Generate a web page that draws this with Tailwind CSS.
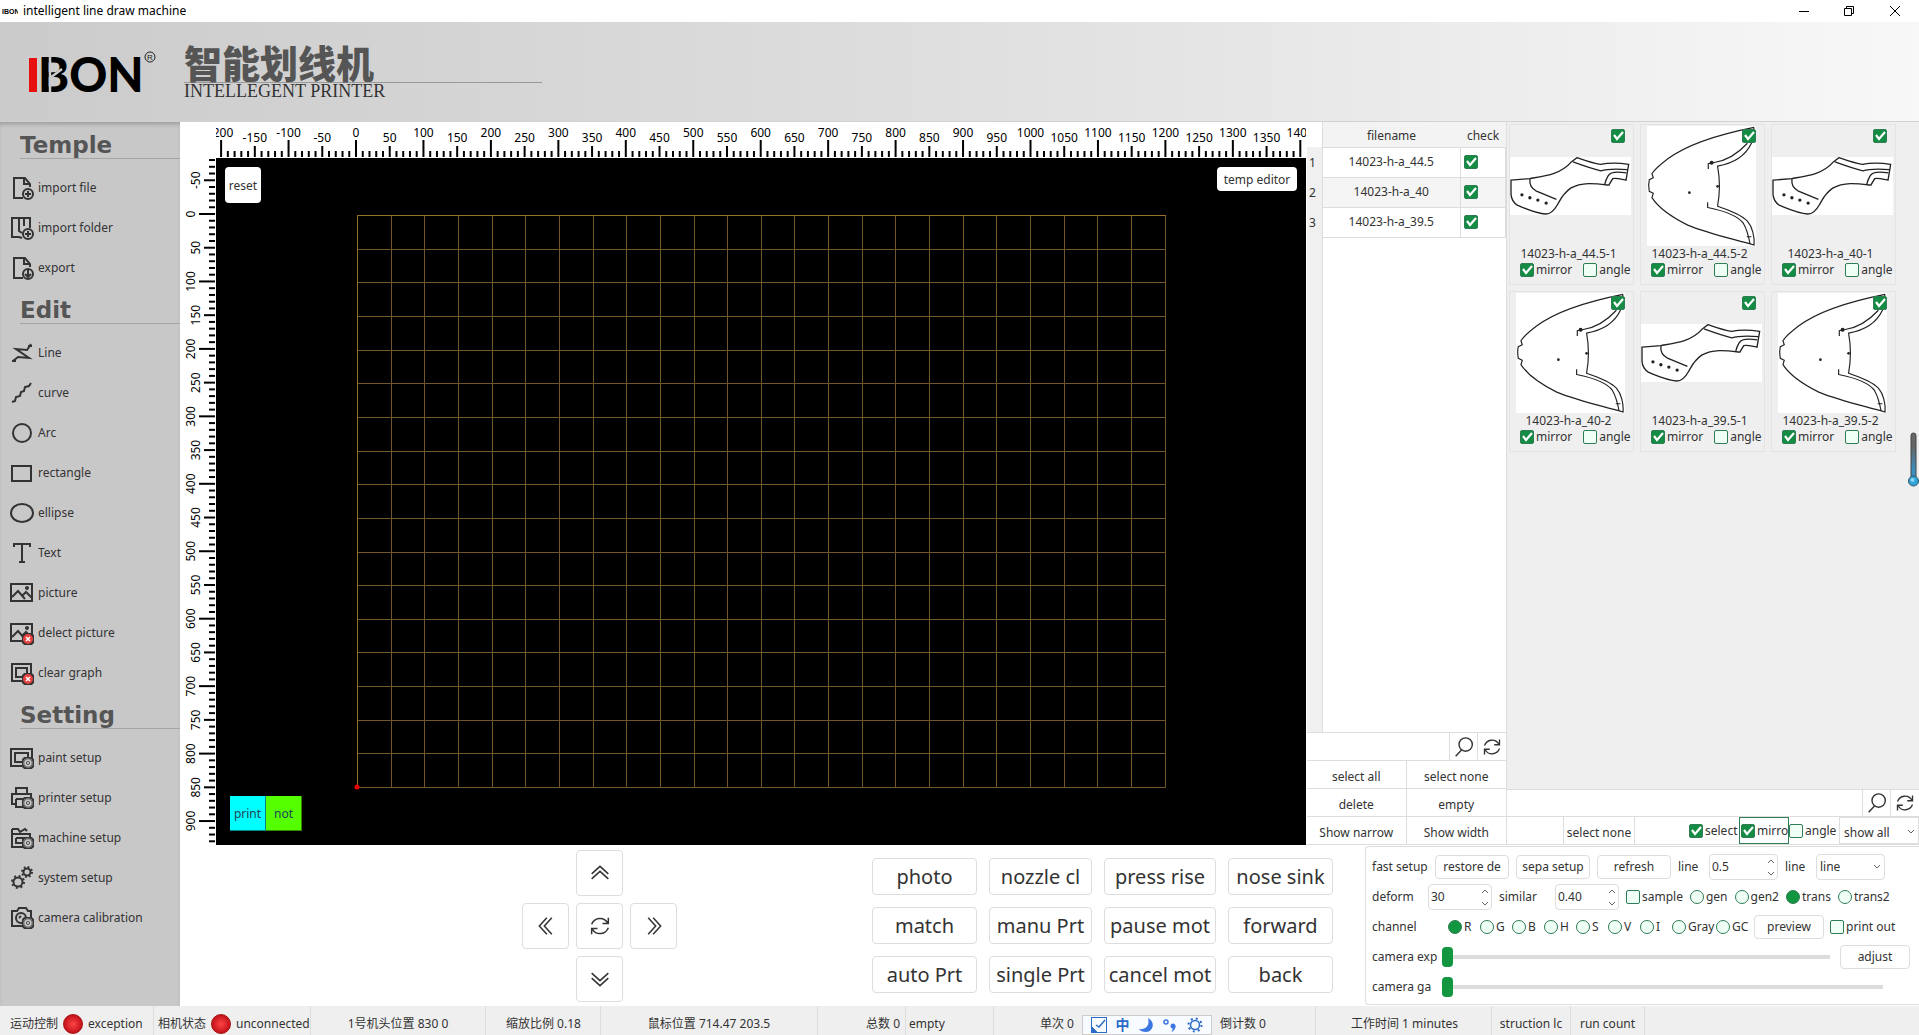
<!DOCTYPE html>
<html lang="en">
  <head>
    <meta charset="UTF-8" />
    <meta name="viewport" content="width=device-width, initial-scale=1.0" />
    <title>intelligent line draw machine</title>
    <script src="https://cdn.jsdelivr.net/npm/@tailwindcss/browser@4"></script>
  </head>
  <body
    class="h-screen overflow-hidden flex flex-col bg-white text-[#333] text-xs font-['Noto_Sans','Noto_Sans_CJK_SC',sans-serif]"
  >
    <!-- shared icons -->
    <svg class="hidden">
      <symbol id="tick" viewBox="0 0 14 14">
        <path d="M3 6l3 4 6-7" fill="none" stroke="#fff" stroke-width="2.2" />
      </symbol>
      <symbol id="down" viewBox="0 0 8 5">
        <path d="M1 1l3 3 3-3" fill="none" stroke="#666" />
      </symbol>
      <symbol id="up" viewBox="0 0 8 5">
        <path d="M1 4l3-3 3 3" fill="none" stroke="#666" />
      </symbol>
      <symbol id="search" viewBox="0 0 24 24">
        <g fill="none" stroke="#333" stroke-width="1.7">
          <circle cx="14" cy="9" r="8" />
          <path d="M9 15.500L2 23" />
        </g>
      </symbol>
      <symbol id="refresh" viewBox="0 0 24 24">
        <g fill="none" stroke="#333" stroke-width="1.8">
          <path d="M2 10C5 2 16 0 21 8M22 2v7h-7" />
          <path d="M22 14c-3 8-14 10-19 2M2 22v-7h7" />
        </g>
      </symbol>
      <symbol id="chev" viewBox="0 0 24 24">
        <path d="M2 13l10-9 10 9M2 19l10-9 10 9" fill="none" stroke="#333" stroke-width="1.800" />
      </symbol>
      <symbol id="gear" viewBox="0 0 12 12">
        <circle cx="6" cy="6" r="6" fill="#c9c9c9" />
        <circle cx="6" cy="6" r="4.200" fill="none" stroke="#444" stroke-width=".9" />
        <circle cx="6" cy="6" r="1.600" fill="none" stroke="#444" stroke-width=".9" />
        <circle cx="6" cy="6" r="5.200" fill="none" stroke="#444" stroke-width="1.200" stroke-dasharray="1.800 2.280" />
      </symbol>
      <symbol id="cross" viewBox="0 0 12 12">
        <circle cx="6" cy="6" r="6" fill="#e8423f" />
        <path d="M4 4l4 4M8 4l-4 4" stroke="#fff" stroke-width="1.5" />
      </symbol>
      <symbol id="shoe" viewBox="33 138 363 175">
        <g fill="none" stroke="#222" stroke-width="4">
          <path d="M35 208L92 203C140 195 185 190 218 152L234 140C262 150 285 158 305 160C335 154 365 156 390 160L382 208C368 205 350 200 342 203L330 223C290 218 250 212 215 232C190 250 185 265 175 282C165 300 155 310 140 310C110 308 80 294 55 284C40 275 36 265 35 250Z" />
          <path d="M222 153C255 165 285 175 306 180C330 172 360 174 386 176M383 186C360 182 335 182 328 195C322 205 320 210 318 220" />
          <path d="M92 203C90 225 98 232 110 240L172 266" />
        </g>
        <g fill="#222">
          <circle cx="68" cy="252" r="5" /><circle cx="92" cy="261" r="5" />
          <circle cx="116" cy="268" r="5" /><circle cx="141" cy="277" r="5" />
        </g>
      </symbol>
      <symbol id="vamp" viewBox="438 46 327 362">
        <g fill="none" stroke="#222" stroke-width="3.500">
          <path d="M760 50C650 72 560 100 500 145C470 168 455 185 452 190L456 202L444 208C441 220 442 232 444 243L456 249L452 262C470 290 510 320 560 345C620 370 690 385 760 405C762 380 755 350 740 333C720 312 680 298 650 288C658 245 658 210 650 167C700 158 735 135 752 98L760 50" />
          <path d="M622 176L622 160L640 156C680 150 715 125 740 98" />
          <path d="M620 276V292C660 300 710 315 728 340C740 360 744 380 748 402M738 380h14" />
        </g>
        <g fill="#222">
          <circle cx="565" cy="247" r="4" /><circle cx="650" cy="228" r="4" /><circle cx="632" cy="157" r="6" />
        </g>
      </symbol>
    </svg>

    <div class="h-[22px] shrink-0 flex items-center bg-white text-black">
      <svg class="ml-[2px] w-4 h-2" viewBox="0 0 16 8">
        <text x="0" y="7" font-size="7" font-weight="bold" font-family="Liberation Sans">IBON</text>
      </svg>
      <span class="ml-[5px]">intelligent line draw machine</span>
      <div class="ml-auto flex">
        <button class="w-[45px] h-[22px] grid place-items-center" aria-label="minimize">
          <svg class="w-3 h-3" viewBox="0 0 12 12"><path d="M1 6.500h10" stroke="#000" /></svg>
        </button>
        <button class="w-[45px] h-[22px] grid place-items-center" aria-label="restore">
          <svg class="w-3 h-3" viewBox="0 0 12 12">
            <path d="M1.500 3.500h7v7h-7zM3.500 3.500v-2h7v7h-2" fill="none" stroke="#000" />
          </svg>
        </button>
        <button class="w-[48px] h-[22px] grid place-items-center" aria-label="close">
          <svg class="w-3 h-3" viewBox="0 0 12 12"><path d="M1 1l10 10M11 1L1 11" stroke="#000" /></svg>
        </button>
      </div>
    </div>

    <header
      class="h-[100px] shrink-0 flex bg-linear-to-r from-[#cbcbcb] via-[#dfdfdf] to-[#f8f8f8] border-b border-[#d2d2d2]"
    >
      <svg class="w-[156px] h-[72px] ml-7 mt-4" viewBox="28 38 156 72">
        <rect x="29" y="58" width="8" height="34" fill="#e8110f" />
        <text x="38" y="92" font-size="47" font-weight="900" font-family="Lato" fill="#000">BON</text>
        <path d="M50 56v38M50 78l12-9" stroke="#cbcbcb" stroke-width="2.500" />
        <circle cx="150" cy="57" r="5" fill="none" stroke="#222" />
        <text x="150" y="60" font-size="8" text-anchor="middle" font-family="Liberation Sans" fill="#222">R</text>
      </svg>
      <div class="pt-[22px]">
        <div
          class="w-[358px] h-[39px] flex items-center border-b border-[#999] text-[38px]/9 font-black text-[#555]"
        >
          智能划线机
        </div>
        <div class="text-lg/4 text-[#333] font-['Liberation_Serif',serif]">INTELLEGENT PRINTER</div>
      </div>
    </header>

    <main class="flex-1 min-h-0 flex">
      <aside id="menu" class="w-[180px] shrink-0 pt-px bg-[#c9c8c9] shadow-[inset_0_4px_4px_-2px_#999]"></aside>

      <div class="flex-1 min-w-0 flex flex-col">
        <div class="flex-1 min-h-0 flex">
          <!-- rulers and drawing area -->
          <section class="flex-1 min-w-0 grid grid-cols-[36px_1fr] grid-rows-[36px_1fr]">
            <div></div>
            <svg id="rulerX" class="w-full h-9 text-xs" fill="#000" text-anchor="middle"></svg>
            <svg id="rulerY" class="w-9 h-full text-xs" fill="#000" text-anchor="middle"></svg>
            <div class="relative bg-black overflow-hidden">
              <svg id="grid" class="absolute inset-0 w-full h-full"></svg>
              <button class="absolute left-[9px] top-[9px] w-9 h-9 pt-[2px] rounded bg-white">reset</button>
              <button class="absolute right-[9px] top-[9px] w-20 h-6 pt-[2px] rounded bg-white">temp editor</button>
              <div class="absolute left-[14px] bottom-[14px] flex h-[35px] text-[#245]">
                <button class="w-9 pt-[2px] bg-[#00ffff] border-r border-b border-[#088]">print</button>
                <button class="w-9 pt-[2px] bg-[#55ff00] border-r border-b border-[#380]">not</button>
              </div>
            </div>
          </section>

          <!-- file list -->
          <section class="w-[201px] shrink-0 flex flex-col border-r border-[#ddd] pl-px">
            <table class="flex-1 w-full h-0 grow border-collapse text-center">
              <thead>
                <tr class="h-[25px]">
                  <td class="w-[15px]"></td>
                  <th class="pt-1 font-normal bg-[#f3f3f3] border-b border-l border-[#ddd]">filename</th>
                  <th class="pt-1 font-normal bg-[#f3f3f3] border-b border-[#ddd] w-[45px]">check</th>
                </tr>
              </thead>
              <tbody id="files"></tbody>
            </table>
            <div class="h-[29px] flex border-y border-[#ddd]">
              <input class="flex-1 min-w-0 border-r border-[#ddd] px-1" aria-label="search file" />
              <button class="w-7 border-r border-[#ddd] grid place-items-center" aria-label="search">
                <svg class="w-5 h-5"><use href="#search" /></svg>
              </button>
              <button class="w-7 grid place-items-center" aria-label="refresh">
                <svg class="w-[18px] h-[18px]"><use href="#refresh" /></svg>
              </button>
            </div>
            <div class="grid grid-cols-2 auto-rows-[28px] [&>button]:pt-1">
              <button class="border-r border-b border-[#ddd]">select all</button>
              <button class="border-b border-[#ddd]">select none</button>
              <button class="border-r border-b border-[#ddd]">delete</button>
              <button class="border-b border-[#ddd]">empty</button>
              <button class="border-r border-b border-[#ddd]">Show narrow</button>
              <button class="border-b border-[#ddd]">Show width</button>
            </div>
          </section>

          <!-- pattern gallery -->
          <section class="w-[412px] shrink-0 flex flex-col bg-[#efefef]">
            <div class="relative flex-1 min-h-0">
              <div id="cards" class="grid grid-cols-[repeat(3,125px)] gap-[6px] pl-[2px] pt-[2px]"></div>
              <svg class="absolute right-0 top-[309px] w-3 h-14" viewBox="0 0 12 56">
                <defs>
                  <linearGradient id="temp" x2="0" y2="1">
                    <stop offset=".3" stop-color="#666" /><stop offset=".8" stop-color="#3a8fc0" />
                  </linearGradient>
                </defs>
                <rect x="4" y="2" width="5" height="46" rx="2.500" fill="url(#temp)" stroke="#444" />
                <circle cx="6.500" cy="50" r="5" fill="#2fa4d8" stroke="#356" />
                <circle cx="5.500" cy="49" r="2" fill="#8fd4f2" />
              </svg>
            </div>
            <div class="h-[28px] flex border-y border-[#ddd] bg-white">
              <input class="flex-1 min-w-0 border-r border-[#ddd] px-1" aria-label="search pattern" />
              <button class="w-7 border-r border-[#ddd] grid place-items-center" aria-label="search">
                <svg class="w-5 h-5"><use href="#search" /></svg>
              </button>
              <button class="w-7 grid place-items-center" aria-label="refresh">
                <svg class="w-[18px] h-[18px]"><use href="#refresh" /></svg>
              </button>
            </div>
            <div class="h-[28px] flex items-stretch bg-white border-b border-[#ddd]">
              <button class="ml-14 w-[72px] pt-1 border-x border-[#ddd]">select none</button>
              <div id="filters" class="ml-auto flex"></div>
              <div class="relative w-20">
                <select class="appearance-none w-full h-full pl-1 pt-1 border border-[#ddd]" aria-label="filter">
                  <option>show all</option>
                </select>
                <svg class="absolute right-1 top-3 w-2 h-[5px] pointer-events-none"><use href="#down" /></svg>
              </div>
            </div>
          </section>
        </div>

        <div class="h-[161px] shrink-0 flex">
          <div class="flex-1 flex items-center pl-[342px]">
            <div class="grid grid-cols-[repeat(3,47px)] auto-rows-[46px] gap-[7px]">
              <button class="col-start-2 border border-[#ddd] rounded grid place-items-center" aria-label="up">
                <svg class="w-5 h-5"><use href="#chev" /></svg>
              </button>
              <button class="col-start-1 border border-[#ddd] rounded grid place-items-center" aria-label="left">
                <svg class="w-5 h-5 -rotate-90"><use href="#chev" /></svg>
              </button>
              <button class="border border-[#ddd] rounded grid place-items-center" aria-label="home">
                <svg class="w-5 h-5"><use href="#refresh" /></svg>
              </button>
              <button class="border border-[#ddd] rounded grid place-items-center" aria-label="right">
                <svg class="w-5 h-5 rotate-90"><use href="#chev" /></svg>
              </button>
              <button class="col-start-2 border border-[#ddd] rounded grid place-items-center" aria-label="down">
                <svg class="w-5 h-5 rotate-180"><use href="#chev" /></svg>
              </button>
            </div>
            <div
              id="actions"
              class="ml-auto mr-8 grid grid-cols-[105px_103px_112px_105px] auto-rows-[37px] gap-3 text-xl"
            ></div>
          </div>

          <form
            class="w-[554px] shrink-0 mt-px mb-px border border-r-0 border-[#ddd] rounded-l pl-[6px] pt-[5px] [&>div]:flex [&>div]:items-center [&>div]:h-[30px]"
          >
            <div class="gap-[7px]">
              <span class="w-14 whitespace-nowrap">fast setup</span>
              <button type="button" class="w-[74px] h-6 border border-[#ddd] rounded whitespace-nowrap">restore de</button>
              <button type="button" class="w-[74px] h-6 border border-[#ddd] rounded whitespace-nowrap">sepa setup</button>
              <button type="button" class="w-[74px] h-6 border border-[#ddd] rounded">refresh</button>
              <label for="width" class="w-6">line</label>
              <span data-spin="width" data-value="0.5" class="w-[69px]"></span>
              <label for="style" class="w-6">line</label>
              <span class="relative w-[69px] h-[26px]">
                <select id="style" class="appearance-none w-full h-full pl-[3px] border border-[#ddd] rounded">
                  <option>line</option>
                </select>
                <svg class="absolute right-1 top-[10px] w-2 h-[5px] pointer-events-none"><use href="#down" /></svg>
              </span>
            </div>
            <div class="gap-[7px]">
              <label for="deform" class="w-[49px]">deform</label>
              <span data-spin="deform" data-value="30" class="w-16"></span>
              <label for="similar" class="w-[49px]">similar</label>
              <span data-spin="similar" data-value="0.40" class="w-16"></span>
              <span id="modes" class="flex gap-[7px]"></span>
            </div>
            <div>
              <span class="w-[76px]">channel</span>
              <span id="channels" class="flex"></span>
              <button type="button" class="w-[70px] h-6 mr-[6px] border border-[#ddd] rounded">preview</button>
              <span id="printOut"></span>
            </div>
            <div>
              <label for="exposure" class="w-[70px] whitespace-nowrap">camera exp</label>
              <input
                id="exposure"
                type="range"
                value="0"
                class="flex-1 min-w-0 h-5 appearance-none bg-transparent [&::-webkit-slider-runnable-track]:h-1 [&::-webkit-slider-runnable-track]:bg-[#dcdcdc] [&::-webkit-slider-thumb]:appearance-none [&::-webkit-slider-thumb]:w-[11px] [&::-webkit-slider-thumb]:h-5 [&::-webkit-slider-thumb]:-mt-2 [&::-webkit-slider-thumb]:rounded [&::-webkit-slider-thumb]:bg-[#129640]"
              />
              <button type="button" class="w-[70px] h-6 ml-[10px] mr-[9px] border border-[#ddd] rounded">adjust</button>
            </div>
            <div>
              <label for="gain" class="w-[70px]">camera ga</label>
              <input
                id="gain"
                type="range"
                value="0"
                class="flex-1 min-w-0 mr-9 h-5 appearance-none bg-transparent [&::-webkit-slider-runnable-track]:h-1 [&::-webkit-slider-runnable-track]:bg-[#dcdcdc] [&::-webkit-slider-thumb]:appearance-none [&::-webkit-slider-thumb]:w-[11px] [&::-webkit-slider-thumb]:h-5 [&::-webkit-slider-thumb]:-mt-2 [&::-webkit-slider-thumb]:rounded [&::-webkit-slider-thumb]:bg-[#129640]"
              />
            </div>
          </form>
        </div>
      </div>
    </main>

    <footer
      class="h-[29px] shrink-0 flex items-stretch bg-[#efefef] whitespace-nowrap [&>div]:flex [&>div]:items-center [&>div]:pt-[6px] [&>div]:border-r [&>div]:border-[#ddd]"
    >
      <div class="w-[154px] pl-[10px] gap-[5px]">
        运动控制
        <i class="w-5 h-5 rounded-full bg-[radial-gradient(#f44,#c01018_75%)] border border-[#a11]"></i>
        exception
      </div>
      <div class="w-[157px] pl-1 gap-[5px]">
        相机状态
        <i class="w-5 h-5 rounded-full bg-[radial-gradient(#f44,#c01018_75%)] border border-[#a11]"></i>
        unconnected
      </div>
      <div class="w-[175px] justify-center">1号机头位置 830 0</div>
      <div class="w-[115px] pl-5">缩放比例 0.18</div>
      <div class="w-[217px] justify-center">鼠标位置 714.47 203.5</div>
      <div class="w-[88px] justify-end pr-[5px]">总数 0</div>
      <div class="w-[88px] pl-[3px]"><button>empty</button></div>
      <div class="w-[322px] pl-[46px]">
        <span class="w-[42px]">单次 0</span>
        <span class="w-[130px] h-5 self-end shrink-0 bg-[#f8fbff] border border-[#ccc] flex items-center justify-around px-1 text-[#2c6cc8]">
          <svg class="w-4 h-4" viewBox="0 0 16 16" fill="none" stroke="#2c6cc8">
            <rect x=".5" y=".5" width="15" height="15" /><path d="M0 9l7 7H0z" fill="#2c6cc8" />
            <path d="M5 8l3 2 6-7" stroke-width="1.500" />
          </svg>
          <b class="text-sm/4">中</b>
          <svg class="w-4 h-4" viewBox="0 0 16 16"><path d="M10 1c8 4 5 14-2 14-3 0-6-1-7-3 7 1 11-4 9-11z" fill="#3b77e0" /></svg>
          <svg class="w-4 h-4" viewBox="0 0 16 16">
            <circle cx="4" cy="5" r="2" fill="none" stroke="#3b77e0" stroke-width="1.500" />
            <circle cx="11" cy="9" r="2.500" fill="#3b77e0" /><path d="M13.500 9q0 4-4 6 2-3 1-5z" fill="#3b77e0" />
          </svg>
          <svg class="w-4 h-4" viewBox="0 0 16 16" fill="none" stroke="#2c6cc8">
            <circle cx="8" cy="8" r="4.500" stroke-width="1.500" />
            <circle cx="8" cy="8" r="6.500" stroke-width="2" stroke-dasharray="2 3.100" />
          </svg>
        </span>
        <span class="ml-2">倒计数 0</span>
      </div>
      <div class="w-[176px] pl-[35px]">工作时间 1 minutes</div>
      <div class="w-[79px] justify-center"><button>struction lc</button></div>
      <div class="w-[74px] justify-center"><button>run count</button></div>
    </footer>

    <script>
      const $ = (id) => document.getElementById(id);

      // sidebar
      const doc = '<path d="M20 11V8l-5-6H4v20h9M14 2v6h6"/><circle cx="18" cy="18" r="5"/>';
      const photo = '<path d="M1 3h21v17H1zM2 16l6-6 7 8M12 15l4-4 6 6"/><circle cx="17" cy="7" r="1"/>';
      const gear = '<use href="#gear" x="12" y="11" width="12" height="12"/>';
      const cross = '<use href="#cross" x="12" y="12" width="12" height="12"/>';
      const menu = {
        Temple: [
          ["import file", doc + '<path d="M15 18h6M18 15v6"/>'],
          ["import folder", '<path d="M20 12V2H2v19h7l3 1M9 2v13l3 2M14 2v8"/><circle cx="18" cy="18" r="5"/><path d="M15 18h6M18 15v6"/>'],
          ["export", doc + '<path d="M18 14v7M15 18l3 3 3-3"/>'],
        ],
        Edit: [
          ["Line", '<path d="M3 20l5-4 11 1L6 8l11 1 4-6M2 20h4M18 5h4"/>'],
          ["curve", '<path d="M2 21l3-1 1-4 4-1 1-4 3-1 1-4 4-1 2-3"/>'],
          ["Arc", '<circle cx="12" cy="12" r="9"/>'],
          ["rectangle", '<path d="M2 5h19v15H2z"/>'],
          ["ellipse", '<ellipse cx="12" cy="12" rx="11" ry="9"/>'],
          ["Text", '<path d="M4 6V3h16v3M12 3v18M9 21h6"/>'],
          ["picture", photo],
          ["delect picture", photo + cross],
          ["clear graph", '<path d="M13 20H2V3h19v9M12 16H6V7h11v5"/>' + cross],
        ],
        Setting: [
          ["paint setup", '<path d="M12 20H1V3h21v9M12 16H5V7h13v5"/>' + gear],
          ["printer setup", '<path d="M6 8V2h11v6M6 18H2V8h19v4M6 13h7M6 13v8h8"/>' + gear],
          ["machine setup", '<path d="M2 3v18h11M2 8h18v4M2 3h6l2 3 5-3 2 2M6 12h8M6 12v5h6"/>' + gear],
          ["system setup", '<circle cx="8" cy="16" r="4.500"/><circle cx="8" cy="16" r="6" stroke-dasharray="2 2.710"/><circle cx="17" cy="6" r="3.500"/><circle cx="17" cy="6" r="5" stroke-dasharray="1.800 2.130"/>'],
          ["camera calibration", '<path d="M12 20H2V5h5l2-3h7l2 3h3v6"/><circle cx="11" cy="12" r="5"/><path d="M9 12l2-2"/>' + gear],
        ],
      };
      $("menu").innerHTML = Object.entries(menu)
        .map(
          ([title, items]) => `
          <h2 class="h-9 ml-5 mb-[9px] pt-2 flex items-center border-b border-[#a5a5a5] text-[23px]/7 font-bold text-[#555] font-['DejaVu_Sans',sans-serif]">${title}</h2>
          ${items
            .map(
              ([name, icon]) => `
            <button class="h-10 w-full flex items-center gap-1 pl-[10px]">
              <svg class="w-6 h-6" viewBox="0 0 24 24" fill="none" stroke="#333" stroke-width="2">${icon}</svg>${name}
            </button>`
            )
            .join("")}`
        )
        .join("");

      // rulers, 50 units = 33.7px
      const K = 0.6745;
      const X0 = 140;
      const Y0 = 56;
      let rx = "";
      for (let v = -200; v <= 1400; v += 10) {
        const x = X0 + v * K;
        const big = v % 100 === 0;
        const mid = v % 50 === 0;
        const top = big ? 18 : mid ? 24 : 29;
        rx += `<rect x="${x - 1}" y="${top}" width="2" height="${35 - top}"/>`;
        if (mid) rx += `<text x="${x}" y="${big ? 15 : 20}">${v}</text>`;
      }
      $("rulerX").innerHTML = rx;

      let ry = "";
      for (let v = -80; v <= 930; v += 10) {
        const y = Y0 + v * K;
        const big = v % 100 === 0;
        const mid = v % 50 === 0;
        const left = big ? 19 : mid ? 24 : 29;
        ry += `<rect x="${left}" y="${y - 1}" width="${35 - left}" height="2"/>`;
        if (mid) ry += `<text transform="translate(${big ? 15 : 20} ${y}) rotate(-90)">${v}</text>`;
      }
      $("rulerY").innerHTML = ry;

      let lines = "";
      for (let i = 0; i <= 24; i++) lines += `M${141.5 + Math.round(i * 33.65)} 57V629`;
      for (let i = 0; i <= 17; i++) lines += `M141 ${57.5 + Math.round(i * 33.65)}H950`;
      $("grid").innerHTML = `
        <path d="${lines}" stroke="#735628" fill="none"/>
        <path d="M141.5 629V57.5H950" stroke="#94702a" fill="none"/>
        <circle cx="141" cy="629" r="2.5" fill="#e00"/>`;

      // check boxes and radios
      const check = (label, on, cls = "") => `
        <label class="flex items-center gap-[2px] ${cls}">
          <span class="relative shrink-0 w-[14px] h-[14px]">
            <input type="checkbox" ${on ? "checked" : ""} aria-label="${label || "check"}" class="peer block appearance-none w-[14px] h-[14px] rounded-xs border border-[#2e7d55] bg-[#effff6] checked:bg-[#148c43]" />
            <svg class="absolute inset-0 w-[14px] h-[14px] hidden peer-checked:block pointer-events-none"><use href="#tick" /></svg>
          </span>${label}
        </label>`;
      const radio = (group, label, on, cls = "") => `
        <label class="flex items-center gap-[2px] ${cls}">
          <input type="radio" name="${group}" ${on ? "checked" : ""} class="appearance-none shrink-0 w-[14px] h-[14px] rounded-full border border-[#2e7d55] bg-[#effff6] checked:bg-[#129640]" />${label}
        </label>`;

      $("files").innerHTML =
        ["14023-h-a_44.5", "14023-h-a_40", "14023-h-a_39.5"]
          .map(
            (f, i) => `
          <tr class="h-[30px] even:bg-[#f5f5f5]">
            <th class="font-normal bg-[#f0f0f0] text-left pl-[2px] pt-[2px]">${i + 1}</th>
            <td class="border border-[#ddd]">${f}</td>
            <td class="border border-[#ddd] pl-[3px]">${check("", true)}</td>
          </tr>`
          )
          .join("") + '<tr><th class="bg-[#f0f0f0]"></th><td colspan="2" class="border-l border-[#ddd]"></td></tr>';

      $("cards").innerHTML = [
        ["14023-h-a_44.5-1", "shoe"],
        ["14023-h-a_44.5-2", "vamp"],
        ["14023-h-a_40-1", "shoe"],
        ["14023-h-a_40-2", "vamp"],
        ["14023-h-a_39.5-1", "shoe"],
        ["14023-h-a_39.5-2", "vamp"],
      ]
        .map(
          ([name, kind]) => `
          <div class="relative h-[161px] border border-[#e4e4e4]">
            <div class="h-[121px] pr-[2px] flex items-center justify-center">
              <svg class="bg-white ${kind === "shoe" ? "w-[121px] h-[58px]" : "w-[109px] h-[120px]"}"><use href="#${kind}" /></svg>
            </div>
            <div class="absolute right-2 top-1">${check("", true)}</div>
            <div class="h-[15px] leading-[15px] pr-[6px] text-center">${name}</div>
            <div class="flex pl-[10px] pt-px gap-[11px]">${check("mirror", true)}${check("angle", false)}</div>
          </div>`
        )
        .join("");

      $("filters").innerHTML =
        check("select", true, "w-[50px] pt-px") +
        check("mirro", true, "w-[50px] pt-px border border-[#2e7d55] pl-px") +
        check("angle", false, "w-[50px] pt-px");

      $("actions").innerHTML = [
        "photo", "nozzle cl", "press rise", "nose sink",
        "match", "manu Prt", "pause mot", "forward",
        "auto Prt", "single Prt", "cancel mot", "back",
      ]
        .map((t) => `<button class="border border-[#ddd] rounded whitespace-nowrap">${t}</button>`)
        .join("");

      // number boxes
      document.querySelectorAll("[data-spin]").forEach((el) => {
        el.innerHTML = `
          <span class="flex h-[26px] border border-[#ddd] rounded">
            <input id="${el.dataset.spin}" value="${el.dataset.value}" class="flex-1 min-w-0 pl-[2px]" />
            <span class="w-3 flex flex-col justify-around items-center">
              <button type="button" aria-label="increase"><svg class="w-2 h-[5px]"><use href="#up" /></svg></button>
              <button type="button" aria-label="decrease"><svg class="w-2 h-[5px]"><use href="#down" /></svg></button>
            </span>
          </span>`;
      });

      $("modes").innerHTML =
        check("sample", false) +
        radio("mode", "gen") +
        radio("mode", "gen2") +
        radio("mode", "trans", true) +
        radio("mode", "trans2");

      $("channels").innerHTML =
        ["R", "G", "B", "H", "S", "V", "I"].map((c) => radio("channel", c, c === "R", "w-8")).join("") +
        radio("channel", "Gray", false, "w-11") +
        radio("channel", "GC", false, "w-[38px]");
      $("printOut").innerHTML = check("print out", false);
    </script>
  </body>
</html>
